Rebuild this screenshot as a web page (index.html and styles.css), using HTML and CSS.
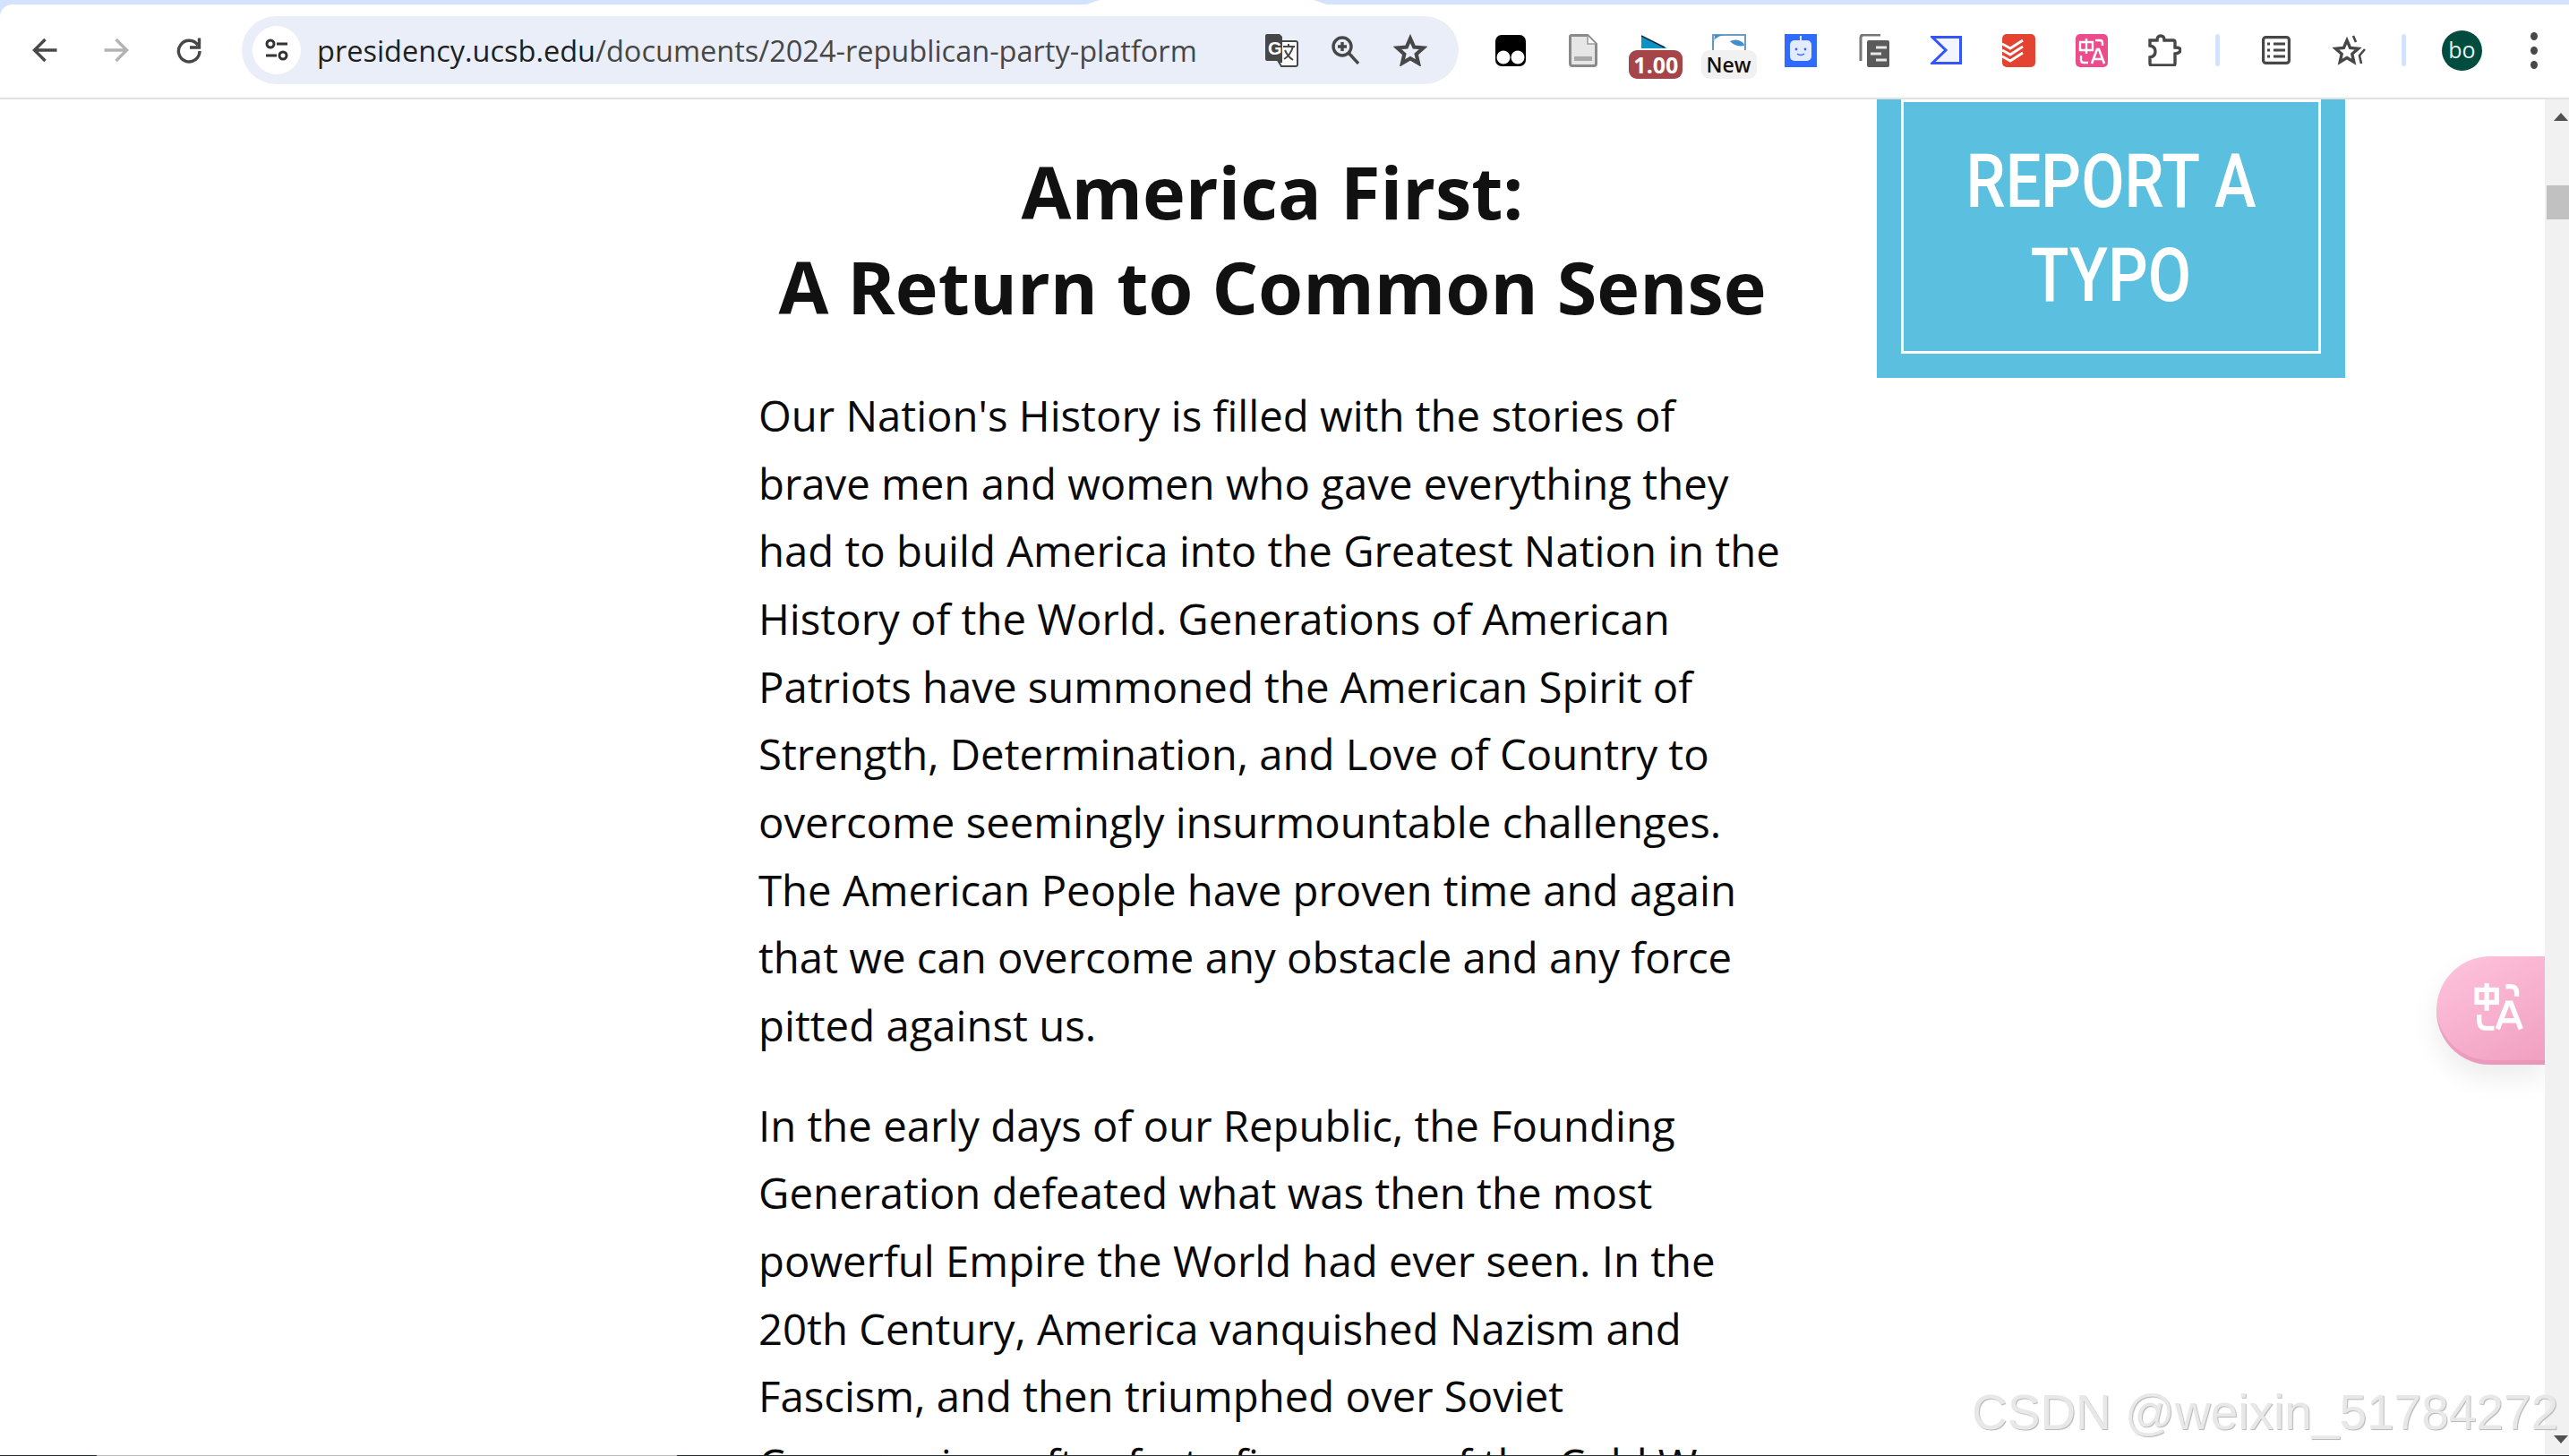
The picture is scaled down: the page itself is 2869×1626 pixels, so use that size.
FILE: index.html
```html
<!DOCTYPE html>
<html lang="en">
<head>
<meta charset="utf-8">
<title>2024 Republican Party Platform</title>
<link rel="stylesheet" href="styles.css">
</head>
<body>
<div class="tabstrip"><div class="tab-white"></div></div>
<header class="toolbar">
  <div class="nav">
    <span class="slot-nav"><svg width="30" height="30" viewBox="0 0 30 30"><path d="M28.5 15H4M15.5 3 3.5 15l12 12" fill="none" stroke="#474747" stroke-width="3.4"/></svg></span>
    <span class="slot-nav"><svg width="30" height="30" viewBox="0 0 30 30"><path d="M1.5 15H26M14.5 3l12 12-12 12" fill="none" stroke="#b3b3b3" stroke-width="3.4"/></svg></span>
    <span class="slot-nav slot-reload"><svg width="30" height="30" viewBox="0 0 30 30"><path d="M25 9.5A11.8 11.8 0 1 0 27 16" fill="none" stroke="#474747" stroke-width="3.4"/><path d="M26.5 1.5v10.5H16" fill="none" stroke="#474747" stroke-width="3.4"/></svg></span>
  </div>
  <div class="omnibox">
    <span class="site-info"><svg width="28" height="28" viewBox="0 0 28 28" fill="none" stroke="#333" stroke-width="3"><circle cx="7" cy="7" r="4"/><path d="M14 7h12M2 20h12"/><circle cx="21" cy="20" r="4"/></svg></span>
    <span class="url"><span class="url-host">presidency.ucsb.edu</span>/documents/2024-republican-party-platform</span>
    <span class="slot-omni"><svg width="38" height="38" viewBox="0 0 38 38"><path d="M2 2h14l3 3v27H2q-2 0-2-2V4q0-2 2-2z" fill="#474747" transform="translate(1 -1)"/><path d="M19 9h16q2 0 2 2v24q0 2-2 2H19l-3-5h3z" fill="#fff" stroke="#474747" stroke-width="2"/><text x="4" y="24" class="g-letter">G</text><path d="M21 15h13M27 12v3M32 15q-3 10-10 14M23 19q3 7 9 11" fill="none" stroke="#474747" stroke-width="2"/></svg></span>
    <span class="slot-omni"><svg width="32" height="32" viewBox="0 0 32 32" fill="none" stroke="#474747" stroke-width="3.4"><circle cx="12" cy="12" r="10"/><path d="M12 7v10M7 12h10M19 19l11 12"/></svg></span>
    <span class="slot-omni"><svg width="38" height="36" viewBox="0 0 38 36"><path d="M19 5l4.2 9.5 10.3 1-7.800 6.900 2.300 10.100L19 27.200 10 32.500l2.300-10.100-7.800-6.900 10.300-1z" fill="none" stroke="#474747" stroke-width="4.2"/></svg></span>
  </div>
  <div class="actions">
    <span class="slot"><svg width="34" height="35" viewBox="0 0 34 35"><rect width="34" height="35" rx="7" fill="#000"/><circle cx="9" cy="25" r="7.5" fill="#fff"/><circle cx="25" cy="25" r="7.5" fill="#fff"/></svg></span>
    <span class="slot"><svg width="32" height="37" viewBox="0 0 32 37"><path d="M3 1.500h18L30.500 11v22q0 2.500-2.500 2.500H4q-2.500 0-2.500-2.500V3q0-1.500 1.500-1.500z" fill="#e6e6e6" stroke="#8a8a8a" stroke-width="3"/><path d="M21 2v9h9" fill="#fafafa" stroke="#9a9a9a" stroke-width="1.5"/><rect x="6" y="25" width="20" height="5" fill="#a8a8a8"/></svg></span>
    <span class="slot"><svg class="art-tri" width="30" height="15" viewBox="0 0 30 15"><path d="M1 1v14h29z" fill="#0f93c5"/><path d="M1 1l26 13" stroke="#0b2a3a" stroke-width="1.5"/></svg><span class="badge badge-red">1.00</span></span>
    <span class="slot"><svg class="art-new" width="38" height="18" viewBox="0 0 38 18"><path d="M1 18V1h36v17" fill="#fff" stroke="#6b9cc4" stroke-width="2"/><path d="M1 18V8Q6 2 14 1H3zM20 8q8-4 15 2l1 3q-10 2-16-5z" fill="#3f8fca"/></svg><span class="badge badge-grey">New</span></span>
    <span class="slot"><svg width="36" height="37" viewBox="0 0 36 37"><rect width="36" height="37" fill="#2f6bff"/><rect x="6" y="7" width="24" height="23" rx="5" fill="#e4ebff"/><path d="M18 2v5" stroke="#e4ebff" stroke-width="2"/><circle cx="13" cy="17" r="1.4" fill="#2f6bff"/><circle cx="23" cy="17" r="1.4" fill="#2f6bff"/><path d="M14 22q4 3 8 0" fill="none" stroke="#2f6bff" stroke-width="1.5"/></svg></span>
    <span class="slot"><svg width="34" height="37" viewBox="0 0 34 37"><path d="M2 30V4q0-3 3-3h19" fill="none" stroke="#777" stroke-width="3"/><rect x="9" y="7" width="25" height="30" rx="2" fill="#5b5b5b"/><path d="M19 15h12M13 22h12M19 29h12" stroke="#e8e8e8" stroke-width="3"/></svg></span>
    <span class="slot"><svg width="35" height="32" viewBox="0 0 35 32"><path d="M2 1.500h31.500v29H2L17 16z" fill="#f2f4ff" stroke="#3355ff" stroke-width="3"/></svg></span>
    <span class="slot"><svg width="37" height="37" viewBox="0 0 37 37"><rect width="37" height="37" rx="5" fill="#e44332"/><path d="M0 11l9 5 14-9M0 18l9 5 14-9M0 25l9 5 14-9" fill="none" stroke="#fff" stroke-width="2.8"/></svg></span>
    <span class="slot"><svg width="36" height="37" viewBox="0 0 36 37"><rect width="36" height="37" rx="5" fill="#ec4c8c"/><path d="M5 9h14v9H5zM12 5v17M22 7h5q3 0 3 3v3M6 24v5q0 3 3 3h5" fill="none" stroke="#fff" stroke-width="2.4"/><path d="M18 33l6-16h2l6 16M20.500 28h9" fill="none" stroke="#fff" stroke-width="2.6"/></svg></span>
    <span class="slot"><svg width="37" height="36" viewBox="0 0 37 36"><path d="M2 7h8q0-5 4-5t4 5h10q2 0 2 2v6q6 0 6 3t-6 4v11q0 2-2 2H4q-2 0-2-2v-7q6-1 6-6.500T2 13z" fill="#fff" stroke="#474747" stroke-width="3.4"/></svg></span>
    <span class="divider"></span>
    <span class="slot-wide"><svg width="32" height="32" viewBox="0 0 32 32" fill="none" stroke="#474747" stroke-width="3.2"><rect x="1.6" y="1.6" width="28.800" height="28.800" rx="3"/><path d="M13 9h13M13 16h13M13 23h13"/><path d="M6 9h3M6 16h3M6 23h3"/></svg></span>
    <span class="slot-star"><svg width="40" height="35" viewBox="0 0 40 35" fill="none" stroke="#474747" stroke-width="3.4"><path d="M17 6l3.600 8.500 9 .8-6.800 6 2 9-7.800-4.700-7.800 4.700 2-9-6.800-6 9-.8z"/><path d="M24 1l3 7M37 16l-6 7 2 9" stroke-width="2.6"/></svg></span>
    <span class="divider divider-b"></span>
    <span class="avatar">bo</span>
    <span class="menu"><i></i><i></i><i></i></span>
  </div>
</header>
<div class="viewport">
  <main class="page">
    <article class="article">
      <h1 class="title">America First:<br>A Return to Common Sense</h1>
      <p class="para">Our Nation's History is filled with the stories of brave men and women who gave everything they had to build America into the Greatest Nation in the History of the World. Generations of American Patriots have summoned the American Spirit of Strength, Determination, and Love of Country to overcome seemingly insurmountable challenges. The American People have proven time and again that we can overcome any obstacle and any force pitted against us.</p>
      <p class="para">In the early days of our Republic, the Founding Generation defeated what was then the most powerful Empire the World had ever seen. In the 20th Century, America vanquished Nazism and Fascism, and then triumphed over Soviet Communism after forty-five years of the Cold War.</p>
    </article>
    <aside class="side">
      <a class="typo-box"><span class="typo-inner"><span class="typo-text">REPORT A<br>TYPO</span></span></a>
    </aside>
    <div class="float-pill"><svg width="58" height="54" viewBox="0 0 62 58" fill="none" stroke="#fff" stroke-width="5.5"><path d="M3 9h24v15H3zM15 1v33M38 5h6q7 0 7 8v4M6 39v7q0 9 8 9h10"/><path d="M28 56l12-31h4l12 31M33 46h18" stroke-width="6"/></svg></div>
  </main>
  <div class="scrollbar">
    <span class="arrow-up"></span>
    <span class="thumb"></span>
    <span class="arrow-down"></span>
  </div>
  <div class="watermark">CSDN @weixin_51784272</div>
</div>
<div class="taskline">
  <span class="seg-a"></span><span class="seg-b"></span><span class="seg-c"></span><span class="seg-d"></span>
</div>
</body>
</html>
```
FILE: styles.css
```css
* { box-sizing: border-box; }
html, body { margin: 0; height: 100%; }
body { height: 100vh; overflow: hidden; display: flex; flex-direction: column; background: #d3e3fd; font-family: "Open Sans", sans-serif; }
.tabstrip { height: 5px; flex: none; position: relative; }
.tab-white { position: absolute; left: 1213px; top: 0; width: 269px; height: 5px; background: #fff; clip-path: polygon(15px 0, 254px 0, 269px 100%, 0 100%); }
.toolbar { flex: none; height: 106px; border-bottom: 2px solid #e1e1e1; display: flex; align-items: center; padding: 0 0 2px 10px; background: #fff; border-top-left-radius: 14px; }
.nav { display: flex; }
.slot-nav { width: 80px; display: flex; justify-content: center; align-items: center; }
.slot-reload { padding-left: 2px; }
.omnibox { margin-left: 20px; width: 1359px; height: 76px; border-radius: 38px; background: #eaeef8; display: flex; align-items: center; padding: 0 18px 0 12px; flex: none; }
.site-info { width: 54px; height: 54px; border-radius: 50%; background: #fff; display: flex; align-items: center; justify-content: center; flex: none; }
.url { flex: 1; margin-left: 18px; font-family: "Open Sans", sans-serif; font-size: 32.5px; color: #474747; white-space: nowrap; }
.url-host { color: #1f1f1f; }
.slot-omni { width: 72px; display: flex; justify-content: center; align-items: center; }
.g-letter { font-family: "Liberation Sans", sans-serif; font-size: 20px; font-weight: 700; fill: #fff; }
.actions { display: flex; align-items: center; margin-left: 17px; }
.slot { width: 81.2px; height: 76px; position: relative; display: flex; justify-content: center; align-items: center; }
.art-tri { position: absolute; top: 21px; left: 24px; }
.art-new { position: absolute; top: 20px; left: 22px; }
.badge { position: absolute; top: 38px; height: 32px; border-radius: 9px; text-align: center; font-family: "Open Sans", sans-serif; font-weight: 700; line-height: 32px; }
.badge-red { left: 11px; width: 60px; background: #a64549; color: #fff; font-size: 25px; }
.badge-grey { left: 10px; width: 62px; background: #f1f1f1; color: #111; font-size: 23px; font-weight: 600; }
.divider { width: 5px; height: 36px; border-radius: 3px; background: #d3e3fd; margin-left: 16px; }
.divider-b { margin-left: 38px; }
.slot-wide { width: 32px; margin-left: 47px; display: flex; }
.slot-star { width: 40px; margin-left: 46px; display: flex; }
.avatar { width: 45px; height: 45px; border-radius: 50%; background: #004d40; color: #e6f2ef; font-family: "Open Sans", sans-serif; font-size: 25px; line-height: 43px; text-align: center; margin-left: 40px; }
.menu { margin-left: 54px; display: flex; flex-direction: column; gap: 7px; }
.menu i { width: 8px; height: 9px; border-radius: 50%; background: #474747; display: block; }
.viewport { flex: 1; min-height: 0; display: flex; position: relative; overflow: hidden; background: #fff; }
.page { flex: 1; min-width: 0; position: relative; display: flex; padding-left: 847px; overflow: hidden; }
.article { width: 1146px; flex: none; padding-top: 49.5px; color: #0a0a0a; }
.title { margin: 0 0 53.5px; padding-left: 2px; font-size: 81px; line-height: 106px; font-weight: 700; text-align: center; color: #111; }
.para { margin: 0 0 36px; font-size: 47.3px; line-height: 75.66px; color: #0a0a0a; }
.side { width: 523px; margin-left: 103px; flex: none; }
.typo-box { display: block; background: #5bbfdf; padding: 0 27px 27px; }
.typo-inner { display: block; border: 3px solid #fff; height: 284px; padding-top: 36px; text-align: center; color: #fff; font-family: Roboto, sans-serif; font-weight: 500; font-size: 84px; line-height: 105px; }
.typo-text { display: block; transform: scaleX(.836); }
.float-pill { position: absolute; right: 0; top: 957px; width: 121px; height: 121px; padding: 0 0 10px 20px; border-radius: 60px 0 0 60px; background: linear-gradient(150deg, #ffc4de, #f09fc0); box-shadow: 0 14px 30px rgba(0,0,0,.08), inset 0 -5px 0 rgba(220,130,170,.35); display: flex; align-items: center; justify-content: center; }
.scrollbar { width: 27px; flex: none; background: #f1f1f1; position: relative; }
.arrow-up { position: absolute; top: 15px; left: 10px; border: 8.5px solid transparent; border-top: 0; border-bottom: 9px solid #505050; }
.thumb { position: absolute; top: 96px; left: 2px; right: 0; height: 38px; background: #c1c1c1; }
.arrow-down { position: absolute; bottom: 14px; left: 10px; border: 8.5px solid transparent; border-bottom: 0; border-top: 9px solid #505050; }
.watermark { position: absolute; left: 2202px; top: 1434px; font-family: "Liberation Sans", sans-serif; font-size: 55px; line-height: 64px; color: #e8e8e8; white-space: nowrap; text-shadow: 1px 1px 1px #b5b5b5; }
.taskline { position: absolute; left: 0; right: 0; bottom: 0; height: 1px; display: flex; }
.seg-a { width: 108px; background: #1f2a30; }
.seg-b { width: 648px; background: #bdbdbd; }
.seg-c { width: 229px; background: #1f2a30; }
.seg-d { flex: 1; background: #2a3238; }
```
